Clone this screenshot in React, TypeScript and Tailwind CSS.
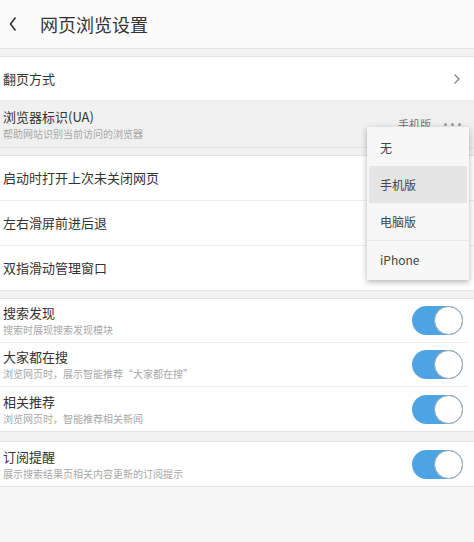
const font = { fontFamily: '"Noto Sans CJK SC", "Noto Sans", sans-serif' };

function Toggle() {
  return (
    <div className="relative h-[29px] w-[51px] shrink-0 rounded-full bg-[#4ea4e2]">
      <div className="absolute right-0 top-0 h-[29px] w-[29px] rounded-full border border-[#9aa4ab] bg-white" />
    </div>
  );
}

function Gap({ h = 'h-[9px]' }: { h?: string }) {
  return <div className={`${h} border-y border-[#e3e3e3] bg-[#f2f2f2]`} />;
}

function PlainRow({ title, last }: { title: string; last?: boolean }) {
  return (
    <div className={`flex items-center pl-[3px] ${last ? 'h-[44px]' : 'h-[45px] border-b border-[#ececec]'}`}>
      <span className="text-[13px] text-[#333]">{title}</span>
    </div>
  );
}

function SwitchRow({ title, desc, last }: { title: string; desc: string; last?: boolean }) {
  return (
    <div className={`mr-[6px] flex h-[44px] items-center justify-between pl-[3px] pr-[5px] ${last ? '' : 'border-b border-[#ececec]'}`}>
      <div className="flex flex-col">
        <span className="text-[13px] leading-[18px] text-[#333]">{title}</span>
        <span className="text-[10px] leading-[15px] text-[#a8a8a8]">{desc}</span>
      </div>
      <Toggle />
    </div>
  );
}

export default function App() {
  return (
    <div className="relative h-[542px] w-[474px] overflow-hidden bg-[#f7f7f7]" style={font}>
      <div className="flex h-[48px] items-center bg-[#fbfbfb]">
        <svg width="24" height="24" viewBox="0 0 24 24" className="ml-[1px]">
          <path d="M14.5 5.5 L9.5 12 L14.5 18.5" fill="none" stroke="#333" strokeWidth="1.6" />
        </svg>
        <span className="ml-[15px] text-[18px] text-[#333]">网页浏览设置</span>
      </div>
      <Gap />

      <div className="bg-white">
        <div className="flex h-[44px] items-center justify-between border-b border-[#ececec] pl-[3px] pr-[12px]">
          <span className="text-[13px] text-[#333]">翻页方式</span>
          <svg width="10" height="12" viewBox="0 0 10 12">
            <path d="M2.5 1.5 L7 6 L2.5 10.5" fill="none" stroke="#888" strokeWidth="1.4" />
          </svg>
        </div>
        <div className="flex h-[46px] items-center justify-between bg-[#f0f0f0] pl-[3px] pr-[13px]">
          <div className="flex flex-col">
            <span className="text-[13px] leading-[18px] text-[#333]">浏览器标识(UA)</span>
            <span className="text-[10px] leading-[15px] text-[#a8a8a8]">帮助网站识别当前访问的浏览器</span>
          </div>
          <div className="flex items-center gap-[13px]">
            <span className="text-[11px] text-[#777]">手机版</span>
            <span className="flex gap-[4px]">
              <span className="h-[3px] w-[3px] rounded-full bg-[#999]" />
              <span className="h-[3px] w-[3px] rounded-full bg-[#999]" />
              <span className="h-[3px] w-[3px] rounded-full bg-[#999]" />
            </span>
          </div>
        </div>
      </div>
      <Gap />

      <div className="bg-white">
        <PlainRow title="启动时打开上次未关闭网页" />
        <PlainRow title="左右滑屏前进后退" />
        <PlainRow title="双指滑动管理窗口" last />
      </div>
      <Gap />

      <div className="bg-white">
        <SwitchRow title="搜索发现" desc="搜索时展现搜索发现模块" />
        <SwitchRow title="大家都在搜" desc="浏览网页时，展示智能推荐“大家都在搜”" />
        <SwitchRow title="相关推荐" desc="浏览网页时，智能推荐相关新闻" last />
      </div>
      <Gap h="h-[11px]" />

      <div className="border-b border-[#e3e3e3] bg-white">
        <SwitchRow title="订阅提醒" desc="展示搜索结果页相关内容更新的订阅提示" last />
      </div>

      <div className="absolute left-[367px] top-[127px] flex h-[153px] w-[102px] flex-col bg-[#f7f7f7] py-[2px] shadow-[0_2px_6px_rgba(0,0,0,0.3)]">
        <div className="flex h-[37px] items-center pl-[13px] text-[12px] text-[#444]">无</div>
        <div className="mx-[2px] flex h-[37px] items-center bg-[#e5e5e5] pl-[11px] text-[12px] text-[#444]">手机版</div>
        <div className="flex h-[38px] items-center border-b border-[#e8e8e8] pl-[13px] text-[12px] text-[#444]">电脑版</div>
        <div className="flex h-[37px] items-center pl-[13px] text-[12px] text-[#444]">iPhone</div>
      </div>
    </div>
  );
}
